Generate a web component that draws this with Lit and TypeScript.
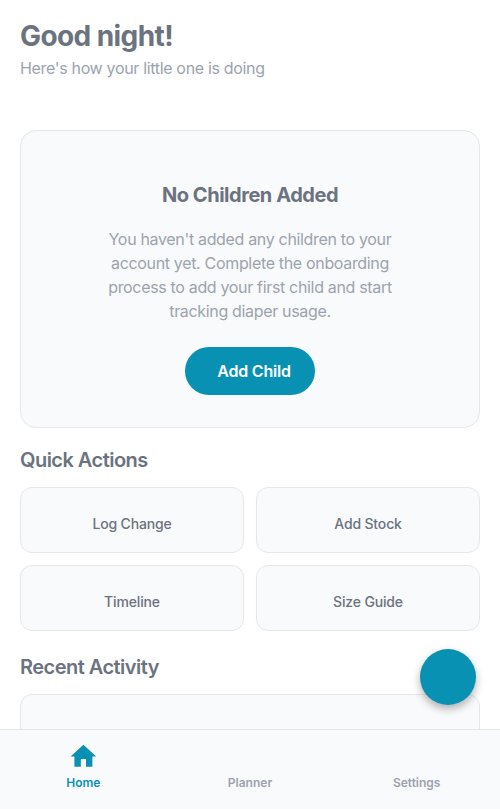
import { LitElement, html, css } from "lit";
import { customElement } from "lit/decorators.js";

const ACTIONS = ["Log Change", "Add Stock", "Timeline", "Size Guide"];

@customElement("app-root")
class AppRoot extends LitElement {
  static styles = css`
    :host {
      display: flex;
      flex-direction: column;
      position: relative;
      height: 809px;
      overflow: hidden;
      background: #fff;
      color: #6b7280;
      font-family: Inter, "Liberation Sans", sans-serif;
    }
    * { box-sizing: border-box; margin: 0; }
    h1, h2, h3, p, button, a { white-space: nowrap; }
    button { font: inherit; color: inherit; }
    main { flex: 1; min-height: 0; overflow: hidden; padding: 19px 20px 0; }
    h1 { font-size: 28px; line-height: 34px; font-weight: 700; letter-spacing: -0.58px; }
    .sub { margin-top: 4px; font-size: 16px; line-height: 22px; color: #9ca3af; letter-spacing: -0.33px; }
    .empty {
      margin-top: 51px;
      height: 298px;
      padding: 52px 32px 0;
      display: flex;
      flex-direction: column;
      align-items: center;
      text-align: center;
      background: #f9fafb;
      border: 1px solid #e5e7eb;
      border-radius: 16px;
    }
    h2 { font-size: 20px; line-height: 24px; font-weight: 600; letter-spacing: -0.53px; }
    .empty h2 { font-weight: 700; letter-spacing: -0.46px; }
    .empty p { margin-top: 20px; font-size: 16px; line-height: 24px; color: #9ca3af; letter-spacing: -0.33px; }
    .add {
      margin-top: 24px;
      width: 130px;
      height: 48px;
      padding: 0 0 0 8px;
      border: 0;
      border-radius: 24px;
      background: #0891b2;
      color: #fff;
      font-size: 16px;
      font-weight: 600;
      letter-spacing: -0.22px;
    }
    .section { margin-top: 20px; }
    .grid {
      margin-top: 15px;
      display: grid;
      grid-template-columns: 1fr 1fr;
      grid-auto-rows: 66px;
      gap: 12px;
    }
    .action {
      padding: 7px 0 0;
      background: #f9fafb;
      border: 1px solid #e5e7eb;
      border-radius: 12px;
      font-size: 14px;
      font-weight: 500;
      letter-spacing: -0.15px;
    }
    .recent { margin-top: 24px; }
    .activity {
      margin-top: 15px;
      height: 120px;
      background: #f9fafb;
      border: 1px solid #e5e7eb;
      border-radius: 12px;
    }
    nav {
      height: 80px;
      flex: none;
      display: grid;
      grid-template-columns: repeat(3, 1fr);
      background: #f9fafb;
      border-top: 1px solid #e5e7eb;
    }
    .tab {
      display: flex;
      flex-direction: column;
      align-items: center;
      padding-top: 11px;
      color: #9ca3af;
      font-size: 12px;
      line-height: 16px;
      font-weight: 600;
    }
    .tab.active { color: #0891b2; }
    .icon { height: 34px; }
    .icon svg { display: block; width: 30.8px; height: 30.8px; fill: currentColor; }
    .fab {
      position: absolute;
      right: 24px;
      bottom: 104px;
      width: 56px;
      height: 56px;
      border: 0;
      border-radius: 50%;
      background: #0891b2;
      box-shadow: 0 4px 8px rgba(0, 0, 0, 0.3);
    }
  `;

  render() {
    return html`
      <main>
        <h1>Good night!</h1>
        <p class="sub">Here's how your little one is doing</p>
        <section class="empty">
          <h2>No Children Added</h2>
          <p>
            You haven't added any children to your<br />account yet. Complete the onboarding<br />process to add your first child and start<br />tracking diaper usage.
          </p>
          <button class="add">Add Child</button>
        </section>
        <h2 class="section">Quick Actions</h2>
        <div class="grid">
          ${ACTIONS.map((label) => html`<button class="action">${label}</button>`)}
        </div>
        <h2 class="recent">Recent Activity</h2>
        <div class="activity"></div>
      </main>
      <nav>
        <a class="tab active">
          <span class="icon"><svg viewBox="0 0 24 24"><path d="M10 20v-6h4v6h5v-8h3L12 3 2 12h3v8z" /></svg></span>
          <span>Home</span>
        </a>
        <a class="tab"><span class="icon"></span><span>Planner</span></a>
        <a class="tab"><span class="icon"></span><span>Settings</span></a>
      </nav>
      <button class="fab" aria-label="Add"></button>
    `;
  }
}
